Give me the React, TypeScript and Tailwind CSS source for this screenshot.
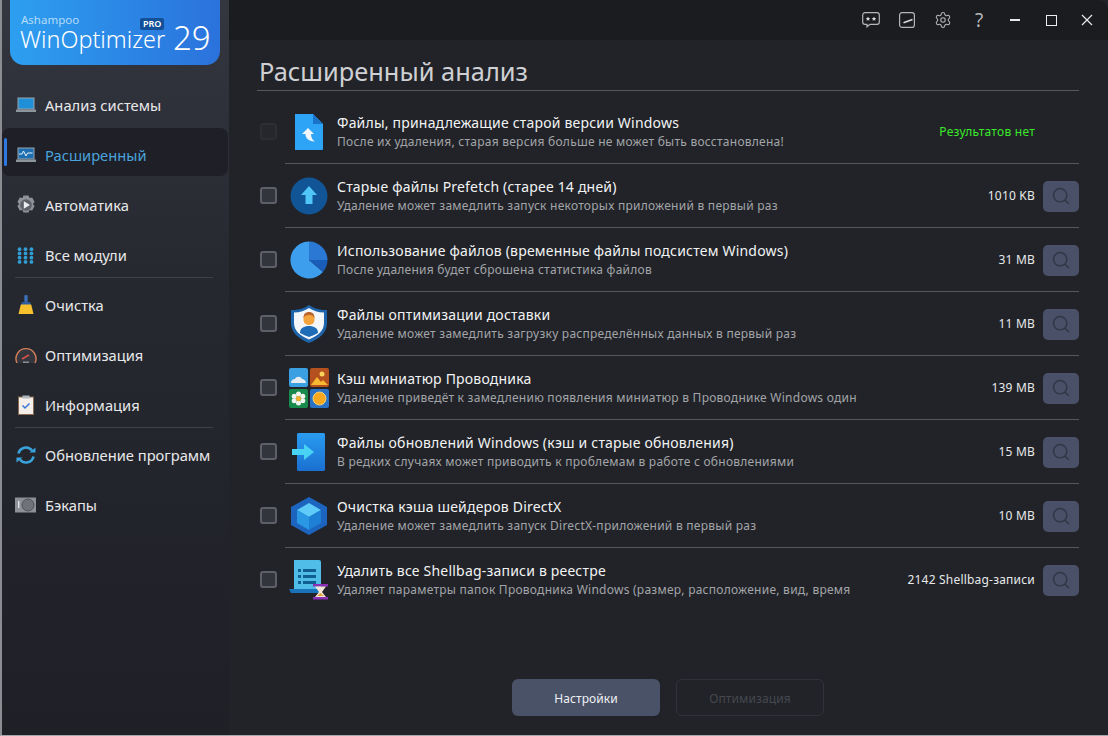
import { Search, Settings } from 'lucide-react'
import type { ReactNode } from 'react'

function LaptopIcon({ wave }: { wave?: boolean }) {
  return (
    <svg width="20" height="16" viewBox="0 0 20 16">
      <rect x="1.500" y="0.500" width="17" height="12" fill="#9aa4ad" />
      <rect x="2.500" y="1.500" width="15" height="10" fill={wave ? '#1d6fb0' : '#1f8fd8'} />
      {wave && <path d="M3 7h3l1.500-3 2.500 5 1.500-3h5" fill="none" stroke="#e6f3fb" strokeWidth="1" />}
      <rect x="0" y="12.500" width="20" height="2.500" fill="#8e969d" />
    </svg>
  )
}

function GearPlay() {
  return (
    <svg width="20" height="20" viewBox="0 0 20 20">
      <path d="M7.500 0.500h5l1 2.500 2.700-.4 2.400 4.300-1.700 2.100 1.700 2.100-2.400 4.300-2.700-.4-1 2.500h-5l-1-2.500-2.700.4-2.400-4.300 1.700-2.100-1.700-2.100 2.400-4.300 2.700.4z" fill="#8f9298" />
      <circle cx="10" cy="10" r="5.800" fill="#5d6067" />
      <path d="M7.800 6.200v7.600l6.200-3.800z" fill="#eceef0" />
    </svg>
  )
}

function GridDots() {
  const dots = []
  for (let r = 0; r < 4; r++) {
    for (let c = 0; c < 3; c++) {
      dots.push(<circle key={`${r}-${c}`} cx={3 + c * 7} cy={2.500 + r * 5} r="2.200" fill="#2f9fd6" />)
    }
  }
  return <svg width="17" height="17" viewBox="0 0 20 20">{dots}</svg>
}

function Broom() {
  return (
    <svg width="18" height="20" viewBox="0 0 18 20">
      <rect x="7.300" y="0" width="3.400" height="7" rx="1" fill="#3a6fb5" />
      <path d="M5 7h8l1 3H4z" fill="#2e5c9c" />
      <path d="M3.800 9.500h10.400l2.300 9.500h-15z" fill="#f7c12e" />
    </svg>
  )
}

function Gauge() {
  return (
    <svg width="22" height="18" viewBox="0 0 22 18">
      <path d="M2 17a10 10 0 1 1 18 0" fill="#34353d" stroke="#d5805a" strokeWidth="1.400" />
      <path d="M7 13l7-4" stroke="#d8524a" strokeWidth="1.500" />
      <rect x="8" y="15.500" width="6" height="1.500" fill="#8d8d95" />
    </svg>
  )
}

function Clipboard() {
  return (
    <svg width="16" height="20" viewBox="0 0 16 20">
      <rect x="0.500" y="2" width="15" height="17.500" fill="#f3eee8" stroke="#8a6a52" />
      <rect x="4.500" y="0.500" width="7" height="3" fill="#aeb6c0" />
      <path d="M4.500 10.500l2.500 2.500 4.500-4.500" fill="none" stroke="#3b78d8" strokeWidth="1.500" />
    </svg>
  )
}

function SyncIcon() {
  return (
    <svg width="20" height="20" viewBox="0 0 20 20" fill="none">
      <path d="M2.500 8.500A7.600 7.600 0 0 1 16 5.500" stroke="#38a3dc" strokeWidth="2.600" />
      <path d="M17.500 11.500A7.600 7.600 0 0 1 4 14.500" stroke="#38a3dc" strokeWidth="2.600" />
      <path d="M13.500 7.500h6v-5z" fill="#38a3dc" />
      <path d="M6.500 12.500h-6v5z" fill="#38a3dc" />
    </svg>
  )
}

function Disk() {
  return (
    <svg width="21" height="16" viewBox="0 0 21 16">
      <rect x="0" y="0.500" width="21" height="15" fill="#8d9096" />
      <rect x="3" y="4" width="1.400" height="7" fill="#e3e4e6" />
      <circle cx="13" cy="8" r="6" fill="#6f7379" stroke="#4f5257" />
    </svg>
  )
}

const nav: { label: string; icon: ReactNode; active?: boolean; rule?: boolean }[] = [
  { label: 'Анализ системы', icon: <LaptopIcon /> },
  { label: 'Расширенный', icon: <LaptopIcon wave />, active: true },
  { label: 'Автоматика', icon: <GearPlay /> },
  { label: 'Все модули', icon: <GridDots />, rule: true },
  { label: 'Очистка', icon: <Broom /> },
  { label: 'Оптимизация', icon: <Gauge /> },
  { label: 'Информация', icon: <Clipboard />, rule: true },
  { label: 'Обновление программ', icon: <SyncIcon /> },
  { label: 'Бэкапы', icon: <Disk /> },
]

function Logo() {
  return (
    <div className="relative ml-[8px] mr-[9px] h-[65px] rounded-b-[14px] bg-gradient-to-r from-[#2d9ff0] to-[#2b72dc] text-white">
      <span className="absolute left-[11px] top-[14px] text-[11.500px] leading-[12px] text-[#b5dcf8]">Ashampoo</span>
      <span className="absolute left-[10px] top-[30px] text-[23.400px] font-light leading-[18px]">WinOptimizer</span>
      <span className="absolute left-[130px] top-[18px] rounded-[2px] bg-[#14509a] px-[3px] text-[9px] font-semibold leading-[12px]">PRO</span>
      <span className="absolute left-[163px] top-[17px] text-[33px] font-light leading-[42px]">29</span>
    </div>
  )
}

function Sidebar() {
  return (
    <aside className="flex w-[229px] shrink-0 flex-col border-l-2 border-[#8b8d92] bg-gradient-to-b from-[#343640] via-[#262830] via-40% to-[#1f2026]">
      <Logo />
      <nav className="mt-[15px] flex flex-col">
        {nav.map((item) => (
          <div key={item.label} className="relative flex h-[50px] items-center">
            {item.active && <span className="absolute left-0 right-[1px] top-[-2px] h-[48px] rounded-[8px] bg-[#1e1f27]" />}
            {item.active && <span className="absolute left-[2px] top-[8px] h-[28px] w-[3px] rounded-full bg-[#2f78e0]" />}
            <span className="relative flex w-[43px] shrink-0 justify-center pl-[4px]">{item.icon}</span>
            <span className={`relative text-[14.700px] ${item.active ? 'text-[#4aa3dc]' : 'text-[#e8e9eb]'}`}>{item.label}</span>
            {item.rule && <span className="absolute bottom-[2px] left-[13px] right-[16px] h-px bg-[#3f4148]" />}
          </div>
        ))}
      </nav>
    </aside>
  )
}

function TitleBar() {
  return (
    <header className="flex h-[40px] shrink-0 items-center justify-end rounded-tr-[10px] bg-[#1b1c20] pr-[3px] text-[#b4b6ba]">
      <span className="flex w-[36px] justify-center">
        <svg width="18" height="16" viewBox="0 0 18 16" fill="none">
          <path d="M3 .7h12a2.300 2.300 0 0 1 2.300 2.300v7a2.300 2.300 0 0 1-2.300 2.300H8l-3 2.500v-2.500H3A2.300 2.300 0 0 1 .7 10V3A2.300 2.300 0 0 1 3 .7z" stroke="#b4b6ba" strokeWidth="1.200" />
          <path d="M6 4.500l.7 1.500 1.500.2-1.100 1 .3 1.600L6 8l-1.400.8.3-1.600-1.100-1 1.500-.2zM12 4.500l.7 1.500 1.500.2-1.100 1 .3 1.600L12 8l-1.400.8.3-1.600-1.100-1 1.500-.2z" fill="#d8d9dc" />
        </svg>
      </span>
      <span className="flex w-[36px] justify-center">
        <svg width="16" height="16" viewBox="0 0 16 16" fill="none">
          <rect x=".6" y=".6" width="14.800" height="14.800" rx="2.500" stroke="#b4b6ba" strokeWidth="1.200" />
          <path d="M4.500 10.800l9-3.300" stroke="#d8d9dc" strokeWidth="1.600" />
        </svg>
      </span>
      <span className="flex w-[36px] justify-center">
        <Settings size={18} strokeWidth={1.400} />
      </span>
      <span className="flex w-[36px] justify-center text-[19px] leading-none">?</span>
      <span className="flex w-[36px] justify-center">
        <span className="h-[1.500px] w-[10px] bg-[#e8e9eb]" />
      </span>
      <span className="flex w-[36px] justify-center">
        <span className="h-[11px] w-[11px] border-[1.500px] border-[#eceded]" />
      </span>
      <span className="flex w-[36px] justify-center">
        <svg width="12" height="12" viewBox="0 0 12 12" fill="none">
          <path d="M1 1l10 10M11 1L1 11" stroke="#e8e9eb" strokeWidth="1.200" />
        </svg>
      </span>
    </header>
  )
}

function FileUp() {
  return (
    <svg width="30" height="36" viewBox="0 0 30 36">
      <path d="M1 0h18l10 10v25a1 1 0 0 1-1 1H1z" fill="#2ea4f7" />
      <path d="M19 0l10 10H19z" fill="#1c74c9" />
      <path d="M14 14l-6 6h3.500c0 4 2.500 7 9.500 7.500-2.500-1.500-4-4-4-7.500h3z" fill="#f2f7fb" />
    </svg>
  )
}

function CircleUp() {
  return (
    <svg width="38" height="38" viewBox="0 0 38 38">
      <circle cx="19" cy="19" r="18.500" fill="#125596" />
      <path d="M19 9l-8 9h4.500v9h7v-9H27z" fill="#4fc5f8" />
    </svg>
  )
}

function Pie() {
  return (
    <svg width="38" height="38" viewBox="0 0 38 38">
      <path d="M19 19V0.500A18.500 18.500 0 1 0 33 31z" fill="#3d9eee" />
      <path d="M19 19V0.500A18.500 18.500 0 0 1 37.500 19z" fill="#2a78d4" />
      <path d="M19 19h18.500A18.500 18.500 0 0 1 33 31z" fill="#1a5db8" />
    </svg>
  )
}

function Shield() {
  return (
    <svg width="38" height="40" viewBox="0 0 38 40">
      <path d="M19 1c4 3 10 5 18 5v13c0 10-8 16-18 20C9 35 1 29 1 19V6c8 0 14-2 18-5z" fill="#1d64ab" />
      <path d="M19 4c4 2.500 9 4.500 15 4.500V19c0 8-6.500 13-15 16.500C10.500 32 4 27 4 19V8.500C10 8.500 15 6.500 19 4z" fill="#f4f7fa" />
      <rect x="13.500" y="9" width="11" height="12" rx="5" fill="#f3a43c" />
      <path d="M13.500 14c0-4 2-6 5.500-6s5.500 2 5.500 6c-1-2-2-3-5.500-3s-4.500 1-5.500 3z" fill="#b8642a" />
      <path d="M10 29c0-5 4-7 9-7s9 2 9 7c-3 1.500-6 3-9 4-3-1-6-2.500-9-4z" fill="#1e6cb8" />
    </svg>
  )
}

function Thumbs() {
  return (
    <div className="grid w-[40px] grid-cols-2 gap-[2px]">
      <svg width="19" height="19" viewBox="0 0 19 19">
        <rect width="19" height="19" rx="2" fill="#3aa0e2" />
        <path d="M2 15c0-3 2-4 4-4 1-3 6-3 7 0 2 0 4 2 4 4z" fill="#e6edf2" />
      </svg>
      <svg width="19" height="19" viewBox="0 0 19 19">
        <rect width="19" height="19" rx="2" fill="#b5501f" />
        <circle cx="12" cy="6" r="2.500" fill="#f9d35a" />
        <path d="M1 17l6-8 4 5 2-2 5 5z" fill="#f6b92f" />
      </svg>
      <svg width="19" height="19" viewBox="0 0 19 19">
        <rect width="19" height="19" rx="2" fill="#178a4c" />
        <g fill="#f4f4f0">
          <circle cx="9.500" cy="5" r="2.500" />
          <circle cx="9.500" cy="14" r="2.500" />
          <circle cx="5.200" cy="7.300" r="2.500" />
          <circle cx="13.800" cy="7.300" r="2.500" />
          <circle cx="5.200" cy="11.700" r="2.500" />
          <circle cx="13.800" cy="11.700" r="2.500" />
        </g>
        <circle cx="9.500" cy="9.500" r="2.500" fill="#f3b02f" />
      </svg>
      <svg width="19" height="19" viewBox="0 0 19 19">
        <rect width="19" height="19" rx="2" fill="#2a72c6" />
        <circle cx="9.500" cy="9.500" r="6.500" fill="#f7a81e" stroke="#f0d27a" />
      </svg>
    </div>
  )
}

function DocArrow() {
  return (
    <svg width="34" height="38" viewBox="0 0 34 38">
      <defs>
        <linearGradient id="docBlue" x1="0" y1="0" x2="0" y2="1">
          <stop offset="0" stopColor="#2a9cf0" />
          <stop offset="1" stopColor="#1a6fd0" />
        </linearGradient>
      </defs>
      <rect x="5" y="0" width="28" height="38" rx="1.500" fill="url(#docBlue)" />
      <path d="M0 16h12v-5l10 8-10 8v-5H0z" fill="#48d3f5" />
    </svg>
  )
}

function Cube() {
  return (
    <svg width="38" height="40" viewBox="0 0 38 40">
      <path d="M19 1l18 10v18L19 39 1 29V11z" fill="#1c64be" />
      <path d="M19 7l12 7-12 7-12-7z" fill="#5ecbf8" />
      <path d="M7 14l12 7v13L7 27z" fill="#2a97e4" />
      <path d="M31 14l-12 7v13l12-7z" fill="#1d80d4" />
    </svg>
  )
}

function RegList() {
  return (
    <svg width="40" height="41" viewBox="0 0 40 41">
      <path d="M5 1h25a2 2 0 0 1 2 2v29H5z" fill="#50bde8" />
      <path d="M0 30h30v4H2z" fill="#1a72b8" />
      <g fill="#0f5f92">
        <rect x="9" y="10" width="3" height="3" />
        <rect x="14" y="10" width="13" height="3" />
        <rect x="9" y="16" width="3" height="3" />
        <rect x="14" y="16" width="13" height="3" />
        <rect x="9" y="22" width="3" height="3" />
        <rect x="14" y="22" width="13" height="3" />
      </g>
      <rect x="24" y="25" width="15" height="2.500" fill="#8b2fb5" />
      <rect x="24" y="38" width="15" height="2.500" fill="#8b2fb5" />
      <path d="M26 27.500h11L33 33l4 5H26l4-5z" fill="#f1e6d8" />
      <path d="M28 37l3.500-3 3.500 3z" fill="#e0a63a" />
    </svg>
  )
}

const rows: { title: string; sub: string; value: string; icon: ReactNode; none?: boolean }[] = [
  { title: 'Файлы, принадлежащие старой версии Windows', sub: 'После их удаления, старая версия больше не может быть восстановлена!', value: 'Результатов нет', icon: <FileUp />, none: true },
  { title: 'Старые файлы Prefetch (старее 14 дней)', sub: 'Удаление может замедлить запуск некоторых приложений в первый раз', value: '1010 KB', icon: <CircleUp /> },
  { title: 'Использование файлов (временные файлы подсистем Windows)', sub: 'После удаления будет сброшена статистика файлов', value: '31 MB', icon: <Pie /> },
  { title: 'Файлы оптимизации доставки', sub: 'Удаление может замедлить загрузку распределённых данных в первый раз', value: '11 MB', icon: <Shield /> },
  { title: 'Кэш миниатюр Проводника', sub: 'Удаление приведёт к замедлению появления миниатюр в Проводнике Windows один', value: '139 MB', icon: <Thumbs /> },
  { title: 'Файлы обновлений Windows (кэш и старые обновления)', sub: 'В редких случаях может приводить к проблемам в работе с обновлениями', value: '15 MB', icon: <DocArrow /> },
  { title: 'Очистка кэша шейдеров DirectX', sub: 'Удаление может замедлить запуск DirectX-приложений в первый раз', value: '10 MB', icon: <Cube /> },
  { title: 'Удалить все Shellbag-записи в реестре', sub: 'Удаляет параметры папок Проводника Windows (размер, расположение, вид, время', value: '2142 Shellbag-записи', icon: <RegList /> },
]

function Row({ row, index }: { row: (typeof rows)[number]; index: number }) {
  return (
    <div className="flex h-[64px] items-center">
      <span className={`ml-[3px] h-[17px] w-[17px] shrink-0 rounded-[3px] border-2 ${row.none ? 'border-[#2c2e34] bg-[#25272c]' : 'border-[#5d6069] bg-[#33353d]'}`} />
      <div className={`ml-[8px] flex h-full min-w-0 flex-1 items-center ${index > 0 ? 'border-t border-[#55575c]' : 'pt-[2px]'}`}>
        <span className="mr-[4px] flex w-[48px] shrink-0 justify-center">{row.icon}</span>
        <div className="min-w-0 flex-1 pb-[1px]">
          <div className="whitespace-nowrap text-[14px] leading-[20px] tracking-[0.2px] text-[#f2f3f4]">{row.title}</div>
          <div className="whitespace-nowrap text-[12px] leading-[17px] tracking-[0.25px] text-[#a3a5a9]">{row.sub}</div>
        </div>
        {row.none ? (
          <span className="mr-[44px] text-[12px] tracking-[0.25px] text-[#3be82a]">{row.value}</span>
        ) : (
          <>
            <span className="text-[12px] tracking-[0.2px] text-[#e8e9eb]">{row.value}</span>
            <button type="button" className="ml-[8px] mt-[1px] flex h-[31px] w-[36px] items-center justify-center rounded-[5px] bg-[#4a5068]">
              <Search size={20} strokeWidth={1.700} className="text-[#2f3644]" />
            </button>
          </>
        )}
      </div>
    </div>
  )
}

export default function App() {
  return (
    <div className="flex h-[736px] w-[1108px] overflow-hidden border-b border-[#a6a7aa] bg-[#8a8d92] font-['Noto_Sans','Open_Sans',sans-serif]">
      <Sidebar />
      <main className="flex min-w-0 flex-1 flex-col bg-[#212328]">
        <TitleBar />
        <div className="flex flex-1 flex-col pl-[28px] pr-[29px]">
          <h1 className="ml-[2px] pt-[12px] text-[25.400px] leading-[38px] text-[#cfd0d3]">Расширенный анализ</h1>
          <div className="h-px bg-[#55575c]" />
          <div className="mt-[8px] flex flex-col">
            {rows.map((row, i) => <Row key={row.title} row={row} index={i} />)}
          </div>
          <div className="mb-[19px] mt-auto flex justify-center gap-[16px]">
            <button type="button" className="h-[37px] w-[148px] rounded-[6px] bg-[#4a5268] pt-[2px] text-[12px] tracking-[0.1px] text-[#f0f1f2]">Настройки</button>
            <button type="button" className="h-[37px] w-[148px] rounded-[6px] border border-[#31333a] pt-[2px] text-[12px] tracking-[0.1px] text-[#45484f]">Оптимизация</button>
          </div>
        </div>
      </main>
    </div>
  )
}
